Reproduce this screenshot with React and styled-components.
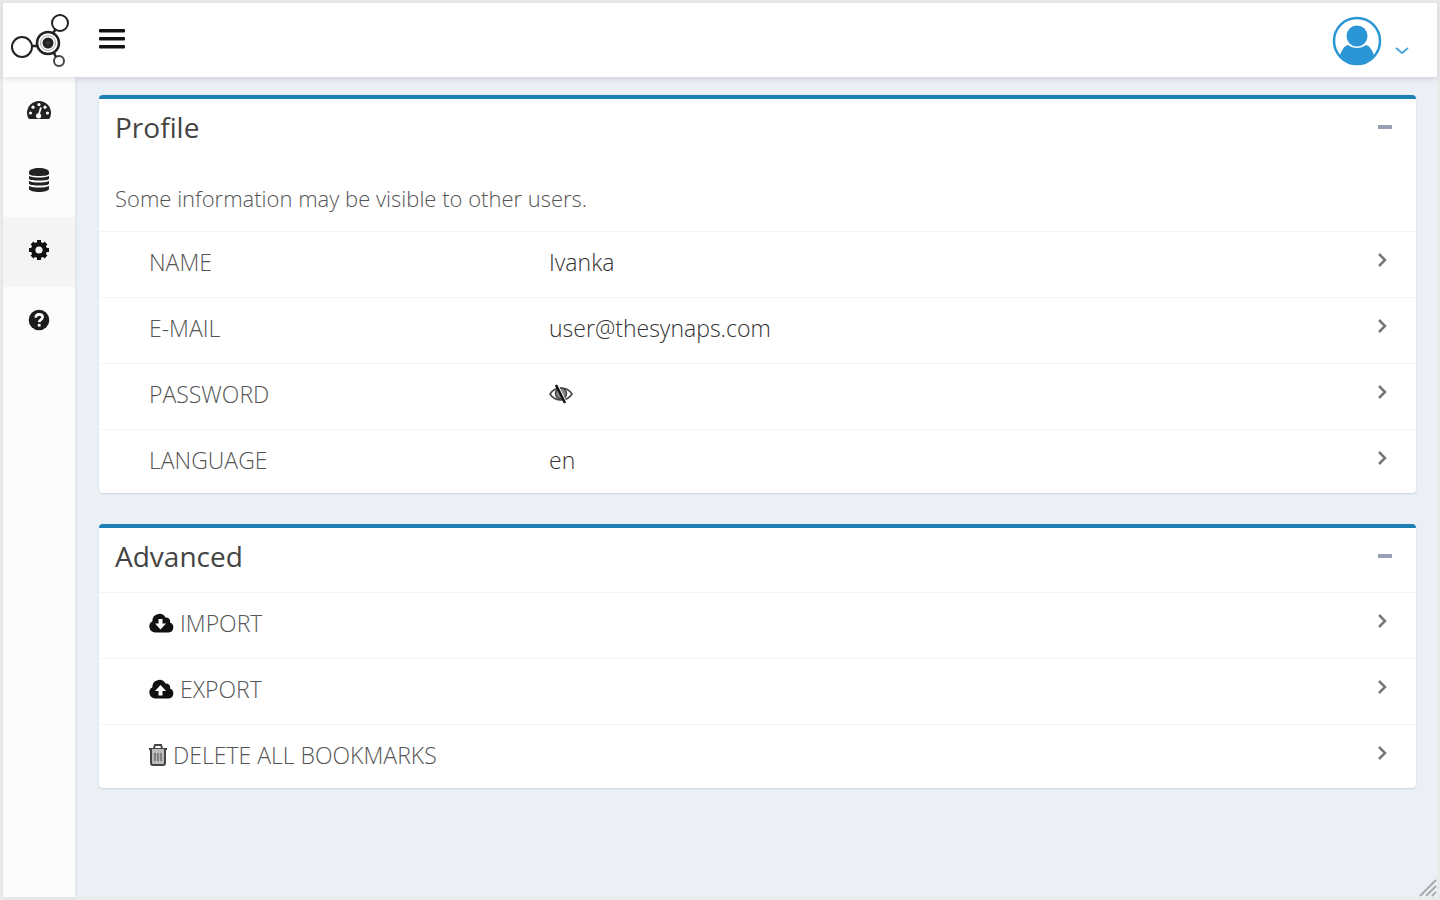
import React, { useState } from "react";
import styled, { createGlobalStyle } from "styled-components";

const GlobalStyle = createGlobalStyle`
  * {
    box-sizing: border-box;
  }

  body {
    margin: 0;
    background: #ebeff6;
    color: #444;
    font-family: "Open Sans", "Noto Sans", sans-serif;
    font-size: 23px;
    font-weight: 300;
  }

  button {
    padding: 0;
    border: 0;
    background: none;
    color: inherit;
    font: inherit;
    cursor: pointer;
  }

  svg {
    display: block;
    flex: none;
  }
`;

const Logo = () => (
  <svg width="60" height="56" viewBox="0 0 60 56" fill="none" stroke="#222">
    <circle cx="12" cy="34" r="10" strokeWidth="2" />
    <circle cx="38" cy="30" r="11" strokeWidth="2.5" />
    <circle cx="38" cy="30" r="7.5" stroke="#aaa" strokeWidth="1" />
    <circle cx="38" cy="30" r="4" fill="#333" strokeWidth="3" />
    <circle cx="50" cy="10" r="8" strokeWidth="2" />
    <circle cx="49" cy="48" r="5" strokeWidth="2" stroke="#444" />
    <path d="M22 33h5M43 20l3-4M44 40l2 4" strokeWidth="2.5" />
  </svg>
);

const BarsIcon = () => (
  <svg width="26" height="22" viewBox="0 0 26 22" fill="#111">
    <rect y="1" width="26" height="3.5" rx="1" />
    <rect y="9" width="26" height="3.5" rx="1" />
    <rect y="17" width="26" height="3.5" rx="1" />
  </svg>
);

const AvatarIcon = () => (
  <svg width="50" height="50" viewBox="0 0 50 50">
    <circle cx="25" cy="25" r="23" fill="#fff" stroke="#2b96d6" strokeWidth="2.5" />
    <circle cx="25" cy="20" r="10.5" fill="#2b96d6" />
    <path
      d="M8 39c2-5 4-9 8-10 5 4 13 4 18 0 4 1 6 5 8 10-4 6-10 9-17 9S12 45 8 39z"
      fill="#2b96d6"
    />
  </svg>
);

const GaugeIcon = () => (
  <svg width="26" height="20" viewBox="0 0 26 20">
    <path d="M1 13a12 12 0 0 1 24 0c0 2-1 5-2 6H3c-1-1-2-4-2-6z" fill="#222" />
    <g fill="#fafcfd">
      <circle cx="4.5" cy="13" r="1.6" />
      <circle cx="7" cy="7.2" r="1.6" />
      <circle cx="13" cy="4.6" r="1.6" />
      <circle cx="19" cy="7.2" r="1.6" />
      <circle cx="21.5" cy="13" r="1.6" />
      <circle cx="12.6" cy="15.8" r="2.6" />
    </g>
    <path d="M12.6 15l2.4-7.5" stroke="#fafcfd" strokeWidth="1.8" />
  </svg>
);

const DatabaseIcon = () => (
  <svg width="20" height="24" viewBox="0 0 20 24" fill="#222">
    <path d="M0 4c0-2 4-4 10-4s10 2 10 4v2c0 1-4 2-10 2S0 7 0 6z" />
    <path d="M0 8c5 2 15 2 20 0v3c-2 2-18 2-20 0z" />
    <path d="M0 13c5 2 15 2 20 0v3c-2 2-18 2-20 0z" />
    <path d="M0 18c5 2 15 2 20 0v3c-1 4-19 4-20 0z" />
  </svg>
);

const CogIcon = () => (
  <svg width="22" height="22" viewBox="0 0 22 22" fill="none" stroke="#111">
    <circle cx="11" cy="11" r="5.8" strokeWidth="4.4" />
    <g strokeWidth="4">
      <path d="M11 1v3M11 18v3M1 11h3M18 11h3" />
      <path d="M4 4l2 2M16 16l2 2M4 18l2-2M16 6l2-2" />
    </g>
  </svg>
);

const HelpIcon = () => (
  <svg width="22" height="22" viewBox="0 0 22 22" fill="none">
    <circle cx="11" cy="11" r="10.3" fill="#1c1c1c" />
    <path d="M7.6 8.6c.6-4.4 7-4 7-.4 0 2.4-3.4 2.4-3.4 5" stroke="#fff" strokeWidth="2.6" />
    <path d="M9.8 15h2.8v2.6H9.8z" fill="#fff" />
  </svg>
);

const EyeSlashIcon = () => (
  <svg width="24" height="20" viewBox="0 0 24 20" fill="none" stroke="#444">
    <path d="M1 10c5-8 17-8 22 0-5 8-17 8-22 0z" strokeWidth="1.6" />
    <path d="M12 4a5 5 0 1 0 0 11 5 5 0 0 0 0-11z" fill="#888" strokeWidth="1.5" />
    <path d="M8 1l9 18" stroke="#fff" strokeWidth="2.5" />
    <path d="M7 1l9 18" stroke="#111" strokeWidth="2.5" />
  </svg>
);

// same cloud for both directions, only the arrow differs
const CloudIcon = ({ up }) => (
  <svg width="25" height="20" viewBox="0 0 25 20">
    <path
      d="M6 19.5a6 6 0 0 1-2.6-11.2A7 7 0 0 1 16.5 4.5a4 4 0 0 1 4.5 5A5.2 5.2 0 0 1 19.8 19.5z"
      fill="#111"
    />
    <path
      d={up ? "M11.5 6l5.5 6h-3.5v4.5h-4V12H6z" : "M9.5 6h4v4.5H17l-5.5 6-5.5-6h3.5z"}
      fill="#fff"
    />
  </svg>
);

const TrashIcon = () => (
  <svg width="18" height="22" viewBox="0 0 18 22" fill="none" stroke="#444" strokeWidth="2">
    <path d="M0 5h18M5 4l1-3h6l1 3" />
    <path d="M2 5v14q0 2 2 2h10q2 0 2-2V5" fill="#bbb" />
    <path d="M6 9v8M9 9v8M12 9v8" strokeWidth="1" />
  </svg>
);

const ChevronRight = () => (
  <svg width="10" height="16" viewBox="0 0 10 16" fill="none" stroke="#777" strokeWidth="2.5">
    <path d="M2 2l6 6-6 6" />
  </svg>
);

const ChevronDown = () => (
  <svg width="14" height="8" viewBox="0 0 14 8" fill="none" stroke="#4aa5dc" strokeWidth="2">
    <path d="M1 1l6 5 6-5" />
  </svg>
);

const menu = [
  { id: "dashboard", label: "Dashboard", icon: <GaugeIcon /> },
  { id: "bookmarks", label: "Bookmarks", icon: <DatabaseIcon /> },
  { id: "settings", label: "Settings", icon: <CogIcon /> },
  { id: "help", label: "Help", icon: <HelpIcon /> }
];

const profile = [
  { label: "NAME", value: "Ivanka" },
  { label: "E-MAIL", value: "user@thesynaps.com" },
  { label: "PASSWORD", value: <EyeSlashIcon /> },
  { label: "LANGUAGE", value: "en" }
];

const advanced = [
  { label: "IMPORT", icon: <CloudIcon /> },
  { label: "EXPORT", icon: <CloudIcon up /> },
  { label: "DELETE ALL BOOKMARKS", icon: <TrashIcon /> }
];

const Panel = ({ title, note, children }) => {
  const [open, setOpen] = useState(true);

  return (
    <Box>
      <BoxHeader>
        <BoxTitle>{title}</BoxTitle>
        <Collapse aria-label={`Collapse ${title}`} aria-expanded={open} onClick={() => setOpen(!open)} />
      </BoxHeader>
      {open && note && <Note>{note}</Note>}
      {open && <Rows>{children}</Rows>}
    </Box>
  );
};

const App = () => {
  const [active, setActive] = useState("settings");

  return (
    <Page>
      <GlobalStyle />
      <Header>
        <LogoLink href="#home" aria-label="Home">
          <Logo />
        </LogoLink>
        <MenuButton aria-label="Toggle menu">
          <BarsIcon />
        </MenuButton>
        <UserButton aria-label="Account">
          <AvatarIcon />
          <ChevronDown />
        </UserButton>
      </Header>
      <Body>
        <Sidebar>
          {menu.map((item) => (
            <MenuLink
              key={item.id}
              href={`#${item.id}`}
              aria-label={item.label}
              $active={item.id === active}
              onClick={() => setActive(item.id)}
            >
              {item.icon}
            </MenuLink>
          ))}
        </Sidebar>
        <Content>
          <Panel title="Profile" note="Some information may be visible to other users.">
            {profile.map((item) => (
              <li key={item.label}>
                <Row>
                  <Label>{item.label}</Label>
                  <Value>{item.value}</Value>
                  <ChevronRight />
                </Row>
              </li>
            ))}
          </Panel>
          <Panel title="Advanced">
            {advanced.map((item) => (
              <li key={item.label}>
                <Row>
                  <Action>
                    {item.icon}
                    <span>{item.label}</span>
                  </Action>
                  <ChevronRight />
                </Row>
              </li>
            ))}
          </Panel>
        </Content>
      </Body>
      <Grip width="18" height="18" viewBox="0 0 18 18" stroke="#aaa" strokeWidth="2">
        <path d="M1 17L17 1M7 17L17 7M13 17l4-4" />
      </Grip>
    </Page>
  );
};

const Page = styled.div`
  position: relative;
  display: flex;
  flex-direction: column;
  min-height: 100vh;
  border: 3px solid #e9eaec;
`;

const Header = styled.header`
  display: flex;
  align-items: center;
  height: 74px;
  padding: 2px 28px 0 7px;
  background: #fff;
  box-shadow: 0 2px 6px rgba(0, 0, 0, 0.12);
  z-index: 1;
`;

const LogoLink = styled.a`
  margin-right: 29px;
`;

const MenuButton = styled.button`
  padding-bottom: 4px;
`;

const UserButton = styled.button`
  display: flex;
  align-items: center;
  gap: 13px;
  margin-left: auto;

  svg:last-child {
    margin-top: 20px;
  }
`;

const Body = styled.div`
  display: flex;
  flex: 1;
`;

const Sidebar = styled.nav`
  width: 72px;
  background: #fafcfd;
  box-shadow: 1px 0 4px rgba(0, 0, 0, 0.06);
`;

const MenuLink = styled.a`
  display: flex;
  align-items: center;
  justify-content: center;
  height: 70px;
  padding-bottom: 4px;
  background: ${({ $active }) => ($active ? "#f4f4f4" : "transparent")};
`;

const Content = styled.main`
  display: flex;
  flex: 1;
  flex-direction: column;
  gap: 31px;
  min-width: 0;
  padding: 18px 21px 30px 24px;
`;

const Box = styled.section`
  border-top: 4px solid #1c80b4;
  border-radius: 4px;
  background: #fff;
  box-shadow: 0 1px 2px rgba(0, 0, 0, 0.12);
`;

const BoxHeader = styled.div`
  display: flex;
  align-items: center;
  justify-content: space-between;
  height: 64px;
  padding: 0 24px 8px 16px;
`;

const BoxTitle = styled.h2`
  margin: 0;
  font-size: 28px;
  font-weight: 400;
  line-height: 36px;
`;

const Collapse = styled.button`
  width: 14px;
  height: 24px;

  &::before {
    content: "";
    display: block;
    height: 4px;
    background: #97a0b3;
  }
`;

const Note = styled.p`
  margin: 0;
  padding: 20px 16px 18px;
  color: #555;
  font-size: 22px;
  line-height: 30px;
`;

const Rows = styled.ul`
  margin: 0;
  padding: 0;
  list-style: none;

  li {
    border-top: 1px solid #f4f4f4;
  }

  li:last-child button {
    padding-bottom: 18px;
  }
`;

const Row = styled.button`
  display: flex;
  width: 100%;
  padding: 15px 29px 20px 50px;
  line-height: 30px;
  text-align: left;

  > svg {
    margin-top: 5px;
  }
`;

const Label = styled.span`
  width: 400px;
  color: #555;
`;

const Value = styled.span`
  flex: 1;
  color: #333;

  svg {
    margin-top: 5px;
  }
`;

const Action = styled.span`
  display: flex;
  flex: 1;
  align-items: center;
  gap: 6px;
  color: #555;
`;

const Grip = styled.svg`
  position: absolute;
  right: 0;
  bottom: 0;
`;

export default App;
